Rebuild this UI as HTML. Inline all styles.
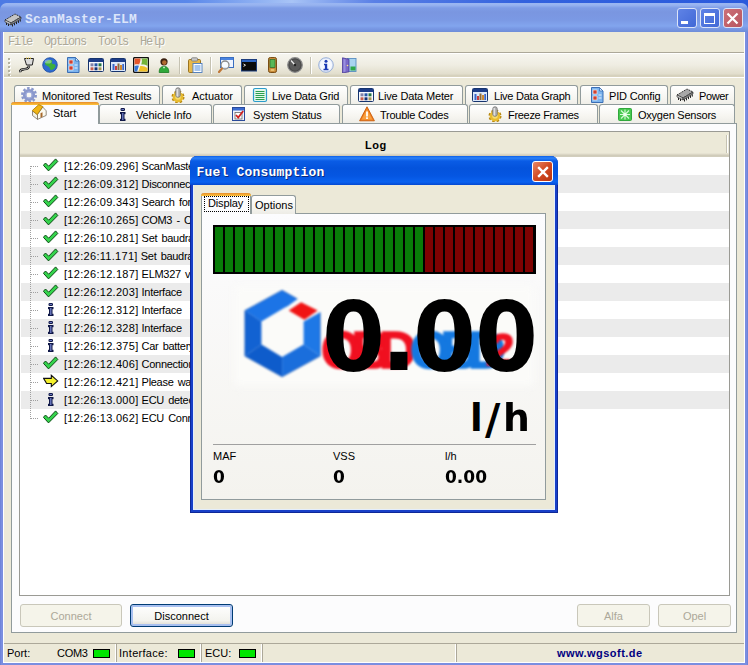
<!DOCTYPE html>
<html><head><meta charset="utf-8"><title>ScanMaster-ELM</title>
<style>
*{box-sizing:border-box;margin:0;padding:0}
html,body{width:748px;height:665px;overflow:hidden;background:#ECE9D8}
body{position:relative;font-family:"Liberation Sans",sans-serif;font-size:11px;color:#000}
.abs,body>div,body>svg,body>span{position:absolute}
#frame{left:0;top:0;width:748px;height:665px;background:#7A8EE0;border-left:1px solid #6F84DA;border-right:1px solid #6F84DA}
#title{left:0;top:0;width:748px;height:32px;background:linear-gradient(#9AB4F2 0,#9AB4F2 3px,#9AB6F2 3px,#98B4F0 5px,#7E9CE6 8px,#7A96E0 12px,#7B99E4 20px,#82A5EE 26px,#7A9AE6 28px,#6E8CD8 32px)}
#ttext{left:25px;top:12px;font-family:"Liberation Mono",monospace;font-weight:bold;font-size:13px;letter-spacing:.2px;color:#DCE5FA;white-space:pre}
#client{left:3px;top:32px;width:742px;height:631px;background:#ECE9D8;border:1px solid #fff;border-top:none}
#tbar{left:4px;top:54px;width:740px;height:22px;background:linear-gradient(#F6F5EF,#EFEDE2 50%,#E2DECD 90%,#D2CEBA)}
.menu{top:35px;font-family:"Liberation Mono",monospace;font-size:12px;letter-spacing:-1.2px;color:#ACA899;text-shadow:1px 1px 0 #fff;white-space:pre}
.cb{top:8px;width:20px;height:20px;border:1px solid #DCE4F8;border-radius:3px;background:linear-gradient(135deg,#5F83E6,#4168D6)}
.cb.x{background:linear-gradient(135deg,#CC7078,#B8555F)}
.t{white-space:nowrap;font-size:11px}
.tab{height:19px;border:1px solid #919B9C;border-bottom:none;border-radius:3px 3px 0 0;background:linear-gradient(#FFFFFF,#F6F5F0 60%,#EDECE6)}
.tab .t{position:absolute;top:3px}
.tab svg{position:absolute;top:1px}
.row{left:21px;width:708px;height:18px}
.row.g{background:#EBEBEB}
.row .t{position:absolute;left:43px;top:3px;font-size:11px}
.ts{letter-spacing:.3px}
.ms{letter-spacing:-.3px;word-spacing:1.5px}
.btn{height:23px;border:1px solid #003C74;border-radius:3px;background:linear-gradient(#fff,#F3F3EE 75%,#DAD6CB);text-align:center;line-height:23px;font-size:11px}
.btn.dis{border-color:#C9C7BA;background:#F5F4EA;color:#ACA899}
.led{width:17px;height:9px;background:#00E600;border:1px solid #000;top:649px}
.sb{top:646px;height:15px;border-left:1px solid #ACA899;box-shadow:-1px 0 0 #fff inset}
</style></head><body>
<div id="frame"></div>
<div id="title"></div><div style="left:0;top:0;width:748px;height:3px;background:linear-gradient(90deg,#4C7AE4 0,#5A88EA 25%,#A8C4F6 39%,#5A80E6 50%,#3362DE 70%,#2A5ADC 100%)"></div><div style="left:0;top:3px;width:7px;height:7px;background:radial-gradient(circle at 7px 7px,transparent 6.5px,#4C7AE4 7.5px)"></div><div style="left:741px;top:3px;width:7px;height:7px;background:radial-gradient(circle at 0 7px,transparent 6.5px,#2A5ADC 7.5px)"></div>
<svg style="left:4px;top:12px" width="18" height="16" viewBox="0 0 18 16"><path d="M1 8L11 2L17 5L7 11Z" fill="#C4C4C4" stroke="#111" stroke-width=".9" stroke-dasharray="1.2 .8"/><path d="M1 8L7 11V13L1 10Z" fill="#D8D8D8" stroke="#222" stroke-width=".6"/><path d="M7 11L17 5V7L7 13Z" fill="#888" stroke="#222" stroke-width=".6"/><path d="M2.5 10.800v2.200M4.5 11.800v2.200M8.5 12.300v2.200M10.5 11.100v2.200M12.5 9.900v2.200M14.5 8.700v2.200M16.3 7.600v2" stroke="#222" stroke-width="1"/></svg>
<div id="ttext">ScanMaster-ELM</div>
<div class="cb" style="left:677px"></div><div style="left:681px;top:21px;width:7px;height:3px;background:#fff"></div>
<div class="cb" style="left:700px"></div><div style="left:704px;top:13px;width:11px;height:11px;border:1px solid #fff;border-top-width:3px"></div>
<div class="cb x" style="left:723px"></div><svg style="left:726px;top:12px" width="13" height="13" viewBox="0 0 13 13"><path d="M1.5 1.5L11.5 11.5M11.5 1.5L1.5 11.5" stroke="#fff" stroke-width="2.2"/></svg>
<div id="client"></div><div id="tbar"></div>
<span class="menu" style="left:8px">File</span><span class="menu" style="left:44px">Options</span><span class="menu" style="left:98px">Tools</span><span class="menu" style="left:140px">Help</span>
<div style="left:4px;top:52px;width:740px;height:1px;background:#ACA899"></div><div style="left:4px;top:53px;width:740px;height:1px;background:#fff"></div>
<div style="left:8px;top:58px;width:2px;height:2px;background:#B5B2A0;box-shadow:1px 1px 0 #fff"></div><div style="left:8px;top:62px;width:2px;height:2px;background:#B5B2A0;box-shadow:1px 1px 0 #fff"></div><div style="left:8px;top:66px;width:2px;height:2px;background:#B5B2A0;box-shadow:1px 1px 0 #fff"></div><div style="left:8px;top:70px;width:2px;height:2px;background:#B5B2A0;box-shadow:1px 1px 0 #fff"></div><div style="left:8px;top:74px;width:2px;height:2px;background:#B5B2A0;box-shadow:1px 1px 0 #fff"></div>
<svg style="left:19px;top:57px" width="16" height="16" viewBox="0 0 16 16"><path d="M5.5 1.500h9l-1.2 6.500h-5.800z" fill="#DCDCDC" stroke="#222" stroke-width="1"/><path d="M7 1.200h6" stroke="#E8C840" stroke-width="1.2" stroke-dasharray="1 1"/><path d="M10 8.500c0 3.5-2.5 3.5-5 3.700s-4 .8-4 3" fill="none" stroke="#111" stroke-width="2.4"/><path d="M10 8.500c0 3.5-2.5 3.5-5 3.700s-4 .8-4 3" fill="none" stroke="#eee" stroke-width=".8"/></svg>
<svg style="left:42px;top:57px" width="16" height="16" viewBox="0 0 16 16"><circle cx="8" cy="8" r="7.3" fill="#2D6BD0" stroke="#1B4AA0" stroke-width=".8"/><path d="M3 6c2-3 5-3.5 7-2.5c1 1-1 2 0 3s3 0 3.5 2c0 2-2 4.5-4.5 4.5c-1.5-1-1-2.5-2.5-3.5s-3.5-1-3.5-3.5z" fill="#3DAE3D"/><ellipse cx="6" cy="4.5" rx="3.5" ry="2" fill="#fff" opacity=".35"/></svg>
<svg style="left:65px;top:57px" width="16" height="16" viewBox="0 0 16 16"><path d="M2.5 .5h8l3.5 3.5v11.5h-11.5z" fill="#7DB4EE" stroke="#3A6EB5"/><path d="M10.5 .5v3.5h3.5z" fill="#D6E8FA" stroke="#3A6EB5" stroke-width=".8"/><rect x="4" y="3" width="4" height="4" fill="#D04030" stroke="#fff" stroke-width=".6"/><rect x="4" y="9" width="4" height="4" fill="#D04030" stroke="#fff" stroke-width=".6"/><path d="M9.5 8h3M9.5 11h3" stroke="#E8F2FC"/></svg>
<svg style="left:88px;top:57px" width="16" height="16" viewBox="0 0 16 16"><rect x=".5" y="1.5" width="15" height="13" rx="1" fill="#F8FAFF" stroke="#16346E"/><rect x="1" y="2" width="14" height="3" fill="#1C3C88"/><rect x="2.5" y="6.3" width="3" height="3" fill="#8484A8"/><rect x="6.5" y="6.3" width="3" height="3" fill="#2456A8"/><rect x="10.5" y="6.3" width="3" height="3" fill="#247444"/><rect x="2.5" y="10.3" width="3" height="3" fill="#C46050"/><rect x="6.5" y="10.3" width="3" height="3" fill="#143474"/><rect x="10.5" y="10.3" width="3" height="3" fill="#A89454"/></svg>
<svg style="left:110px;top:57px" width="16" height="16" viewBox="0 0 16 16"><rect x=".5" y="1.5" width="15" height="13" rx="1" fill="#DCE8FA" stroke="#16346E"/><rect x="1" y="2" width="14" height="3" fill="#1C3C88"/><rect x="2.5" y="7" width="2" height="6" fill="#3A66C8"/><rect x="5" y="9" width="2" height="4" fill="#C83C3C"/><rect x="7.5" y="6.5" width="2" height="6.5" fill="#8A6A3A"/><rect x="10" y="8" width="2" height="5" fill="#D08A30"/><rect x="12.3" y="7" width="1.7" height="6" fill="#3A66C8"/></svg>
<svg style="left:133px;top:57px" width="16" height="16" viewBox="0 0 16 16"><rect x=".5" y=".5" width="15" height="15" rx="1.5" fill="#F4F4F0" stroke="#111" stroke-width="1.4"/><path d="M1.5 1.5h6c0 3-.8 4.5-1.3 6c-1.8-.4-3.5-.3-4.7.2z" fill="#E4562A"/><path d="M8.7 1.500h5.800v7.500c-2-1.3-4.2-1.7-6.3-1.400c.8-2 .8-3.8.5-6.100z" fill="#74B43A"/><path d="M1.5 9c1.3-.7 3-.8 4.4-.3c-.5 1.8-1.2 3.8-1.8 5.800h-2.600z" fill="#3474D4"/><path d="M7.2 9c2.5-.4 5 .5 7.3 2v3.500h-9.200c.7-1.7 1.4-3.7 1.9-5.500z" fill="#F0C028"/></svg>
<svg style="left:156px;top:57px" width="16" height="16" viewBox="0 0 16 16"><circle cx="8" cy="4.8" r="3.6" fill="#3A2010"/><circle cx="8.3" cy="5.6" r="2.3" fill="#B06A30"/><path d="M3.2 15.500c0-4.5 1.8-6 4.8-6s4.8 1.5 4.8 6z" fill="#2FA83A" stroke="#167A20" stroke-width=".8"/><path d="M6.8 9.800l1.2 2l1.2-2z" fill="#E8F8E8"/></svg>
<svg style="left:187px;top:57px" width="16" height="16" viewBox="0 0 16 16"><rect x="1.5" y="2.5" width="12" height="13" rx="1.2" fill="#E8B84A" stroke="#9A7420"/><rect x="4.5" y=".8" width="6" height="3.2" rx="1" fill="#C8C8C8" stroke="#777" stroke-width=".8"/><rect x="6" y="6.5" width="9" height="9" fill="#FFFFFF" stroke="#4A7CC0" stroke-width=".9"/><path d="M7.5 9h6M7.5 11h6M7.5 13h6" stroke="#4A8CE0" stroke-width="1.1"/></svg>
<svg style="left:218px;top:57px" width="16" height="16" viewBox="0 0 16 16"><rect x="2.5" y=".5" width="13" height="10" fill="#EEF4FF" stroke="#3A6EC0"/><rect x="3" y="1" width="12" height="2" fill="#4A84E0"/><circle cx="7" cy="8" r="4" fill="#F8FCFF" fill-opacity=".85" stroke="#8A8A8A" stroke-width="1.3"/><path d="M4 11.5l-3 3.5" stroke="#C07838" stroke-width="2.2" stroke-linecap="round"/></svg>
<svg style="left:241px;top:57px" width="16" height="16" viewBox="0 0 16 16"><rect x=".5" y="2.5" width="15" height="11.5" fill="#0A0A0A" stroke="#1D3E7E"/><rect x="1" y="3" width="14" height="2" fill="#2E66C4"/><path d="M2.5 7l2 1.200l-2 1.2" stroke="#fff" stroke-width=".9" fill="none"/></svg>
<svg style="left:265px;top:57px" width="16" height="16" viewBox="0 0 16 16"><rect x="3.5" y=".5" width="8" height="15" rx="1.8" fill="#C88A3A" stroke="#7A4E14"/><rect x="5" y="2.5" width="5" height="8" fill="#58B858" stroke="#2A6A2A" stroke-width=".7"/><rect x="5.5" y="12" width="4" height="2" rx=".8" fill="#E8C070"/></svg>
<svg style="left:287px;top:57px" width="16" height="16" viewBox="0 0 16 16"><circle cx="8" cy="8" r="7.3" fill="#4A4A4A" stroke="#8A8A8A" stroke-width="1.2"/><circle cx="8" cy="8" r="5.5" fill="#5A5A5A"/><path d="M8 8L4 3.5" stroke="#eee" stroke-width="1.3"/><circle cx="8" cy="8" r="1.2" fill="#222"/></svg>
<svg style="left:318px;top:57px" width="16" height="16" viewBox="0 0 16 16"><circle cx="8" cy="8" r="7.3" fill="#E4ECFA" stroke="#9AB0D8" stroke-width="1"/><circle cx="8" cy="8" r="6" fill="#F6F9FF"/><circle cx="8" cy="4.2" r="1.5" fill="#1C3CB4"/><path d="M6 6.8h3.2v5h1.3v1.4h-5v-1.4h1.4v-3.6h-.9z" fill="#1C3CB4"/></svg>
<svg style="left:341px;top:57px" width="16" height="16" viewBox="0 0 16 16"><rect x="6.5" y="1.5" width="8.5" height="13" fill="#A8D4F0" stroke="#5A8EC0" stroke-width=".9"/><rect x="9.5" y="9.5" width="5" height="4" fill="#2FA84A"/><path d="M1.5 .8l6.5 1.500v12.500l-6.5 1.200z" fill="#7A68C8" stroke="#4A3A98" stroke-width=".8"/><path d="M2.5 2l2 .5v12l-2 .4z" fill="#9A90E0"/><circle cx="6.5" cy="8.5" r=".8" fill="#FFE080"/></svg>
<div style="left:179px;top:57px;width:1px;height:17px;background:#C5C2B2;box-shadow:1px 0 0 #fff"></div><div style="left:210px;top:57px;width:1px;height:17px;background:#C5C2B2;box-shadow:1px 0 0 #fff"></div><div style="left:310px;top:57px;width:1px;height:17px;background:#C5C2B2;box-shadow:1px 0 0 #fff"></div>
<div style="left:4px;top:76px;width:740px;height:1px;background:#D8D2BD"></div><div style="left:4px;top:77px;width:740px;height:1px;background:#fff"></div>
<div class="tab" style="left:14px;top:85px;width:146px;height:21px"></div><svg style="left:21px;top:87px" width="16" height="16" viewBox="0 0 16 16"><circle cx="8" cy="8" r="6.7" fill="none" stroke="#8A98CC" stroke-width="2.6" stroke-dasharray="2.5 1.710"/><circle cx="8" cy="8" r="4.3" fill="none" stroke="#8A98CC" stroke-width="3.6"/><circle cx="8" cy="8" r="3.2" fill="none" stroke="#A8B4E0" stroke-width=".8"/></svg><span class="t" style="left:42px;top:90px;letter-spacing:-0.1px">Monitored Test Results</span>
<div class="tab" style="left:162px;top:85px;width:80px;height:21px"></div><svg style="left:170px;top:87px" width="16" height="16" viewBox="0 0 16 16"><circle cx="8" cy="10" r="5" fill="#E4B424" stroke="#B88810" stroke-width="3" stroke-dasharray="2.2 1.73"/><circle cx="8" cy="10" r="5.3" fill="#E8BC30"/><circle cx="8" cy="10" r="2.8" fill="#F6DC70"/><rect x="5.8" y=".8" width="4.4" height="9.5" rx="2" fill="#B4B4B4" stroke="#6E6E6E" stroke-width=".8"/><path d="M7.2 2v7.5" stroke="#eee" stroke-width="1.1"/></svg><span class="t" style="left:192px;top:90px;letter-spacing:0px">Actuator</span>
<div class="tab" style="left:244px;top:85px;width:104px;height:21px"></div><svg style="left:252px;top:87px" width="16" height="16" viewBox="0 0 16 16"><rect x="1.5" y="1.5" width="13" height="13" rx="1.5" fill="#E4F6EC" stroke="#2A9CCC" stroke-width="1.2"/><path d="M3.5 4.500h9M3.5 6.500h9M3.5 8.500h9M3.5 10.500h9M3.5 12.500h9" stroke="#28A04C" stroke-width="1.1"/></svg><span class="t" style="left:272px;top:90px;letter-spacing:-0.22px">Live Data Grid</span>
<div class="tab" style="left:350px;top:85px;width:113px;height:21px"></div><svg style="left:358px;top:87px" width="16" height="16" viewBox="0 0 16 16"><rect x=".5" y="1.5" width="15" height="13" rx="1" fill="#F8FAFF" stroke="#16346E"/><rect x="1" y="2" width="14" height="3" fill="#1C3C88"/><rect x="2.5" y="6.3" width="3" height="3" fill="#8484A8"/><rect x="6.5" y="6.3" width="3" height="3" fill="#2456A8"/><rect x="10.5" y="6.3" width="3" height="3" fill="#247444"/><rect x="2.5" y="10.3" width="3" height="3" fill="#C46050"/><rect x="6.5" y="10.3" width="3" height="3" fill="#143474"/><rect x="10.5" y="10.3" width="3" height="3" fill="#A89454"/></svg><span class="t" style="left:378px;top:90px;letter-spacing:-0.16px">Live Data Meter</span>
<div class="tab" style="left:465px;top:85px;width:113px;height:21px"></div><svg style="left:472px;top:87px" width="16" height="16" viewBox="0 0 16 16"><rect x=".5" y="1.5" width="15" height="13" rx="1" fill="#DCE8FA" stroke="#16346E"/><rect x="1" y="2" width="14" height="3" fill="#1C3C88"/><rect x="2.5" y="7" width="2" height="6" fill="#3A66C8"/><rect x="5" y="9" width="2" height="4" fill="#C83C3C"/><rect x="7.5" y="6.5" width="2" height="6.5" fill="#8A6A3A"/><rect x="10" y="8" width="2" height="5" fill="#D08A30"/><rect x="12.3" y="7" width="1.7" height="6" fill="#3A66C8"/></svg><span class="t" style="left:494px;top:90px;letter-spacing:-0.24px">Live Data Graph</span>
<div class="tab" style="left:580px;top:85px;width:88px;height:21px"></div><svg style="left:589px;top:87px" width="16" height="16" viewBox="0 0 16 16"><path d="M2.5 .5h8l3.5 3.5v11.5h-11.5z" fill="#7DB4EE" stroke="#3A6EB5"/><path d="M10.5 .5v3.5h3.5z" fill="#D6E8FA" stroke="#3A6EB5" stroke-width=".8"/><rect x="4" y="3" width="4" height="4" fill="#D04030" stroke="#fff" stroke-width=".6"/><rect x="4" y="9" width="4" height="4" fill="#D04030" stroke="#fff" stroke-width=".6"/><path d="M9.5 8h3M9.5 11h3" stroke="#E8F2FC"/></svg><span class="t" style="left:609px;top:90px;letter-spacing:-0.18px">PID Config</span>
<div class="tab" style="left:670px;top:85px;width:65px;height:21px"></div><svg style="left:676px;top:87px" width="18" height="16" viewBox="0 0 18 16"><path d="M1 8L11 2L17 5L7 11Z" fill="#A8A8A8" stroke="#111" stroke-width=".9" stroke-dasharray="1.2 .8"/><path d="M1 8L7 11V13L1 10Z" fill="#D8D8D8" stroke="#222" stroke-width=".6"/><path d="M7 11L17 5V7L7 13Z" fill="#888" stroke="#222" stroke-width=".6"/><path d="M2.5 10.800v2.200M4.5 11.800v2.200M8.5 12.300v2.200M10.5 11.100v2.200M12.5 9.900v2.200M14.5 8.700v2.200M16.3 7.600v2" stroke="#222" stroke-width="1"/></svg><span class="t" style="left:699px;top:90px;letter-spacing:-0.38px">Power</span>
<div class="tab" style="left:99px;top:104px;width:113px;height:20px"></div><svg style="left:115px;top:106px" width="16" height="16" viewBox="0 0 16 16"><rect x="5.5" y="2" width="4.5" height="3" rx="1.2" fill="#101848"/><rect x="6.5" y="3" width="2.5" height="1" fill="#6A78C0"/><rect x="5" y="6" width="5.5" height="2.2" fill="#101848"/><rect x="6" y="6" width="3.5" height="9" fill="#101848"/><rect x="5" y="12.8" width="5.5" height="2.2" fill="#101848"/><rect x="7" y="7" width="1.5" height="7" fill="#6472B8"/></svg><span class="t" style="left:136px;top:109px;letter-spacing:-0.12px">Vehicle Info</span>
<div class="tab" style="left:213px;top:104px;width:127px;height:20px"></div><svg style="left:231px;top:106px" width="16" height="16" viewBox="0 0 16 16"><rect x="1.5" y="1.5" width="12" height="13" fill="#F0F4FF" stroke="#2A4A9A"/><rect x="2" y="2" width="11" height="2.5" fill="#3A6AD0"/><rect x="4" y="6.5" width="7" height="6.5" fill="#fff" stroke="#666" stroke-width=".8"/><path d="M5 9l2.2 2.5l5-6.5" stroke="#D02020" stroke-width="1.8" fill="none"/></svg><span class="t" style="left:253px;top:109px;letter-spacing:-0.18px">System Status</span>
<div class="tab" style="left:342px;top:104px;width:126px;height:20px"></div><svg style="left:359px;top:106px" width="16" height="16" viewBox="0 0 16 16"><path d="M8 .8l7.4 14h-14.8z" fill="#F08020" stroke="#C85A08" stroke-width=".9" stroke-linejoin="round"/><path d="M8 3.5l5.3 10h-10.6z" fill="#F8A040"/><rect x="7.1" y="5.5" width="1.8" height="5" fill="#fff"/><rect x="7.1" y="11.3" width="1.8" height="1.7" fill="#fff"/></svg><span class="t" style="left:380px;top:109px;letter-spacing:-0.25px">Trouble Codes</span>
<div class="tab" style="left:469px;top:104px;width:129px;height:20px"></div><svg style="left:487px;top:106px" width="16" height="16" viewBox="0 0 16 16"><circle cx="8" cy="10" r="5" fill="#E4B424" stroke="#B88810" stroke-width="3" stroke-dasharray="2.2 1.73"/><circle cx="8" cy="10" r="5.3" fill="#E8BC30"/><circle cx="8" cy="10" r="2.8" fill="#F6DC70"/><rect x="5.8" y=".8" width="4.4" height="9.5" rx="2" fill="#B4B4B4" stroke="#6E6E6E" stroke-width=".8"/><path d="M7.2 2v7.5" stroke="#eee" stroke-width="1.1"/></svg><span class="t" style="left:508px;top:109px;letter-spacing:-0.3px">Freeze Frames</span>
<div class="tab" style="left:599px;top:104px;width:136px;height:20px"></div><svg style="left:618px;top:108px" width="14" height="13" viewBox="0 0 14 13"><rect x=".5" y=".5" width="13" height="12" rx="1" fill="#48C850" stroke="#30A83C"/><path d="M7 1.500v10M2 6.500h10M3 2.500l8 8M11 2.500l-8 8" stroke="#D8FCD8" stroke-width="1.1"/><circle cx="7" cy="6.5" r="1.6" fill="#F0FFF0"/></svg><span class="t" style="left:638px;top:109px;letter-spacing:-0.23px">Oxygen Sensors</span>
<div id="tabpage" style="left:11px;top:123px;width:726px;height:510px;border:1px solid #919B9C;background:#FCFCFD"></div>
<div class="tab" style="left:11px;top:102px;width:88px;height:22px;background:#FCFCFE;border-top:none"></div><div style="left:11px;top:102px;width:88px;height:3px;border-radius:3px 3px 0 0;background:linear-gradient(#E68B2C,#FFC73C)"></div><svg style="left:32px;top:104px" width="16" height="16" viewBox="0 0 16 16"><path d="M.5 7L5.5 10.500V15.400L.5 11.500Z" fill="#F2F0E6" stroke="#7A7060" stroke-width=".8"/><path d="M5.5 10.500L10.7 3L14.2 6.800V11.400L5.5 15.400Z" fill="#FCFAF0" stroke="#7A7060" stroke-width=".8"/><path d="M8.5 9.200L10.5 8.200V12.800L8.5 13.800Z" fill="#A8682A"/><path d="M.3 6.500L6.8 .6L10.9 2.600L5.2 10.600Z" fill="#F0B414" stroke="#A87808" stroke-width=".8" stroke-linejoin="round"/></svg><span class="t" style="left:53px;top:107px">Start</span>
<div style="left:19px;top:131px;width:711px;height:465px;border:1px solid #9A9A94;background:#fff"></div><div style="left:20px;top:132px;width:709px;height:25px;background:linear-gradient(#ECE9D8 0,#ECE9D8 21px,#E0DCCC 22px,#D4D0BE 23px,#CCC8B6 24px,#D8D4C4 25px)"></div><div style="left:726px;top:135px;width:1px;height:18px;background:#C5C2B2;box-shadow:1px 0 0 #fff"></div><span class="t" style="left:365px;top:139px;font-weight:bold;letter-spacing:.5px">Log</span>
<div class="row" style="top:157px"><span class="t"><span class="ts">[12:26:09.296]</span> <span class="ms">ScanMaster-ELM</span></span></div><svg style="left:43px;top:158px" width="16" height="14" viewBox="0 0 16 14"><path d="M.4 7.300L2.5 5L5.7 8.200L12.6 .9L14.8 3.500L5.5 12.900Z" fill="#34D44C" stroke="#0C4A14" stroke-width="1" stroke-linejoin="miter"/></svg><div style="left:31px;top:166px;width:8px;height:1px;background:repeating-linear-gradient(90deg,#A0A0A0 0 1px,transparent 1px 2px)"></div>
<div class="row g" style="top:175px"><span class="t"><span class="ts">[12:26:09.312]</span> <span class="ms">Disconnected</span></span></div><svg style="left:43px;top:176px" width="16" height="14" viewBox="0 0 16 14"><path d="M.4 7.300L2.5 5L5.7 8.200L12.6 .9L14.8 3.500L5.5 12.900Z" fill="#34D44C" stroke="#0C4A14" stroke-width="1" stroke-linejoin="miter"/></svg><div style="left:31px;top:184px;width:8px;height:1px;background:repeating-linear-gradient(90deg,#A0A0A0 0 1px,transparent 1px 2px)"></div>
<div class="row" style="top:193px"><span class="t"><span class="ts">[12:26:09.343]</span> <span class="ms">Search for interface</span></span></div><svg style="left:43px;top:194px" width="16" height="14" viewBox="0 0 16 14"><path d="M.4 7.300L2.5 5L5.7 8.200L12.6 .9L14.8 3.500L5.5 12.900Z" fill="#34D44C" stroke="#0C4A14" stroke-width="1" stroke-linejoin="miter"/></svg><div style="left:31px;top:202px;width:8px;height:1px;background:repeating-linear-gradient(90deg,#A0A0A0 0 1px,transparent 1px 2px)"></div>
<div class="row g" style="top:211px"><span class="t"><span class="ts">[12:26:10.265]</span> <span class="ms">COM3 - Connected</span></span></div><svg style="left:43px;top:212px" width="16" height="14" viewBox="0 0 16 14"><path d="M.4 7.300L2.5 5L5.7 8.200L12.6 .9L14.8 3.500L5.5 12.900Z" fill="#34D44C" stroke="#0C4A14" stroke-width="1" stroke-linejoin="miter"/></svg><div style="left:31px;top:220px;width:8px;height:1px;background:repeating-linear-gradient(90deg,#A0A0A0 0 1px,transparent 1px 2px)"></div>
<div class="row" style="top:229px"><span class="t"><span class="ts">[12:26:10.281]</span> <span class="ms">Set baudrate</span></span></div><svg style="left:43px;top:230px" width="16" height="14" viewBox="0 0 16 14"><path d="M.4 7.300L2.5 5L5.7 8.200L12.6 .9L14.8 3.500L5.5 12.900Z" fill="#34D44C" stroke="#0C4A14" stroke-width="1" stroke-linejoin="miter"/></svg><div style="left:31px;top:238px;width:8px;height:1px;background:repeating-linear-gradient(90deg,#A0A0A0 0 1px,transparent 1px 2px)"></div>
<div class="row g" style="top:247px"><span class="t"><span class="ts">[12:26:11.171]</span> <span class="ms">Set baudrate</span></span></div><svg style="left:43px;top:248px" width="16" height="14" viewBox="0 0 16 14"><path d="M.4 7.300L2.5 5L5.7 8.200L12.6 .9L14.8 3.500L5.5 12.900Z" fill="#34D44C" stroke="#0C4A14" stroke-width="1" stroke-linejoin="miter"/></svg><div style="left:31px;top:256px;width:8px;height:1px;background:repeating-linear-gradient(90deg,#A0A0A0 0 1px,transparent 1px 2px)"></div>
<div class="row" style="top:265px"><span class="t"><span class="ts">[12:26:12.187]</span> <span class="ms">ELM327 v1.3</span></span></div><svg style="left:43px;top:266px" width="16" height="14" viewBox="0 0 16 14"><path d="M.4 7.300L2.5 5L5.7 8.200L12.6 .9L14.8 3.500L5.5 12.900Z" fill="#34D44C" stroke="#0C4A14" stroke-width="1" stroke-linejoin="miter"/></svg><div style="left:31px;top:274px;width:8px;height:1px;background:repeating-linear-gradient(90deg,#A0A0A0 0 1px,transparent 1px 2px)"></div>
<div class="row g" style="top:283px"><span class="t"><span class="ts">[12:26:12.203]</span> <span class="ms">Interface&nbsp; found</span></span></div><svg style="left:43px;top:284px" width="16" height="14" viewBox="0 0 16 14"><path d="M.4 7.300L2.5 5L5.7 8.200L12.6 .9L14.8 3.500L5.5 12.900Z" fill="#34D44C" stroke="#0C4A14" stroke-width="1" stroke-linejoin="miter"/></svg><div style="left:31px;top:292px;width:8px;height:1px;background:repeating-linear-gradient(90deg,#A0A0A0 0 1px,transparent 1px 2px)"></div>
<div class="row" style="top:301px"><span class="t"><span class="ts">[12:26:12.312]</span> <span class="ms">Interface&nbsp; type</span></span></div><svg style="left:43px;top:301px" width="16" height="16" viewBox="0 0 16 16"><rect x="5.5" y="2" width="4.5" height="3" rx="1.2" fill="#101848"/><rect x="6.5" y="3" width="2.5" height="1" fill="#6A78C0"/><rect x="5" y="6" width="5.5" height="2.2" fill="#101848"/><rect x="6" y="6" width="3.5" height="9" fill="#101848"/><rect x="5" y="12.8" width="5.5" height="2.2" fill="#101848"/><rect x="7" y="7" width="1.5" height="7" fill="#6472B8"/></svg><div style="left:31px;top:310px;width:8px;height:1px;background:repeating-linear-gradient(90deg,#A0A0A0 0 1px,transparent 1px 2px)"></div>
<div class="row g" style="top:319px"><span class="t"><span class="ts">[12:26:12.328]</span> <span class="ms">Interface&nbsp; version</span></span></div><svg style="left:43px;top:319px" width="16" height="16" viewBox="0 0 16 16"><rect x="5.5" y="2" width="4.5" height="3" rx="1.2" fill="#101848"/><rect x="6.5" y="3" width="2.5" height="1" fill="#6A78C0"/><rect x="5" y="6" width="5.5" height="2.2" fill="#101848"/><rect x="6" y="6" width="3.5" height="9" fill="#101848"/><rect x="5" y="12.8" width="5.5" height="2.2" fill="#101848"/><rect x="7" y="7" width="1.5" height="7" fill="#6472B8"/></svg><div style="left:31px;top:328px;width:8px;height:1px;background:repeating-linear-gradient(90deg,#A0A0A0 0 1px,transparent 1px 2px)"></div>
<div class="row" style="top:337px"><span class="t"><span class="ts">[12:26:12.375]</span> <span class="ms">Car battery voltage</span></span></div><svg style="left:43px;top:337px" width="16" height="16" viewBox="0 0 16 16"><rect x="5.5" y="2" width="4.5" height="3" rx="1.2" fill="#101848"/><rect x="6.5" y="3" width="2.5" height="1" fill="#6A78C0"/><rect x="5" y="6" width="5.5" height="2.2" fill="#101848"/><rect x="6" y="6" width="3.5" height="9" fill="#101848"/><rect x="5" y="12.8" width="5.5" height="2.2" fill="#101848"/><rect x="7" y="7" width="1.5" height="7" fill="#6472B8"/></svg><div style="left:31px;top:346px;width:8px;height:1px;background:repeating-linear-gradient(90deg,#A0A0A0 0 1px,transparent 1px 2px)"></div>
<div class="row g" style="top:355px"><span class="t"><span class="ts">[12:26:12.406]</span> <span class="ms">Connection established</span></span></div><svg style="left:43px;top:356px" width="16" height="14" viewBox="0 0 16 14"><path d="M.4 7.300L2.5 5L5.7 8.200L12.6 .9L14.8 3.500L5.5 12.900Z" fill="#34D44C" stroke="#0C4A14" stroke-width="1" stroke-linejoin="miter"/></svg><div style="left:31px;top:364px;width:8px;height:1px;background:repeating-linear-gradient(90deg,#A0A0A0 0 1px,transparent 1px 2px)"></div>
<div class="row" style="top:373px"><span class="t"><span class="ts">[12:26:12.421]</span> <span class="ms">Please wait</span></span></div><svg style="left:43px;top:374px" width="16" height="14" viewBox="0 0 16 14"><path d="M.6 4.400H8.300V1.300L14.7 6.900L8.3 12.600V9.500H3.600Z" fill="#F4F02C" stroke="#111" stroke-width="1.1" stroke-linejoin="miter"/></svg><div style="left:31px;top:382px;width:8px;height:1px;background:repeating-linear-gradient(90deg,#A0A0A0 0 1px,transparent 1px 2px)"></div>
<div class="row g" style="top:391px"><span class="t"><span class="ts">[12:26:13.000]</span> <span class="ms">ECU detected</span></span></div><svg style="left:43px;top:391px" width="16" height="16" viewBox="0 0 16 16"><rect x="5.5" y="2" width="4.5" height="3" rx="1.2" fill="#101848"/><rect x="6.5" y="3" width="2.5" height="1" fill="#6A78C0"/><rect x="5" y="6" width="5.5" height="2.2" fill="#101848"/><rect x="6" y="6" width="3.5" height="9" fill="#101848"/><rect x="5" y="12.8" width="5.5" height="2.2" fill="#101848"/><rect x="7" y="7" width="1.5" height="7" fill="#6472B8"/></svg><div style="left:31px;top:400px;width:8px;height:1px;background:repeating-linear-gradient(90deg,#A0A0A0 0 1px,transparent 1px 2px)"></div>
<div class="row" style="top:409px"><span class="t"><span class="ts">[12:26:13.062]</span> <span class="ms">ECU Connected</span></span></div><svg style="left:43px;top:410px" width="16" height="14" viewBox="0 0 16 14"><path d="M.4 7.300L2.5 5L5.7 8.200L12.6 .9L14.8 3.500L5.5 12.900Z" fill="#34D44C" stroke="#0C4A14" stroke-width="1" stroke-linejoin="miter"/></svg><div style="left:31px;top:418px;width:8px;height:1px;background:repeating-linear-gradient(90deg,#A0A0A0 0 1px,transparent 1px 2px)"></div>
<div style="left:30px;top:166px;width:1px;height:253px;background:repeating-linear-gradient(#A0A0A0 0 1px,transparent 1px 2px)"></div>
<div class="btn dis" style="left:20px;top:604px;width:102px">Connect</div><div class="btn" style="left:130px;top:604px;width:103px;box-shadow:0 0 0 2px #A8C0F0 inset">Disconnect</div><div class="btn dis" style="left:577px;top:604px;width:73px">Alfa</div><div class="btn dis" style="left:658px;top:604px;width:73px">Opel</div>
<div style="left:4px;top:643px;width:740px;height:1px;background:#ACA899"></div><div style="left:115px;top:644px;width:1px;height:18px;background:#fff;box-shadow:1px 0 0 #ACA899"></div><div style="left:200px;top:644px;width:1px;height:18px;background:#fff;box-shadow:1px 0 0 #ACA899"></div><div style="left:261px;top:644px;width:1px;height:18px;background:#fff;box-shadow:1px 0 0 #ACA899"></div><div style="left:455px;top:644px;width:1px;height:18px;background:#fff;box-shadow:1px 0 0 #ACA899"></div><span class="t" style="left:7px;top:647px">Port:</span><span class="t" style="left:57px;top:647px;letter-spacing:-.3px">COM3</span><div class="led" style="left:93px"></div><span class="t" style="left:119px;top:647px;letter-spacing:.3px">Interface:</span><div class="led" style="left:178px"></div><span class="t" style="left:205px;top:647px">ECU:</span><div class="led" style="left:239px"></div><span class="t" style="left:557px;top:647px;font-weight:bold;letter-spacing:.45px;color:#000080">www.wgsoft.de</span>
<div id="dlg" style="left:190px;top:156px;width:368px;height:357px;background:#1840C8;border:1px solid #0E2898;border-top:none;border-radius:7px 7px 0 0"></div><div style="left:190px;top:156px;width:368px;height:29px;border-radius:7px 7px 0 0;background:linear-gradient(#0A5FE8 0,#2C82F8 2px,#0A5CE6 5px,#0453DC 12px,#0556E2 20px,#0A62F0 26px,#0548D0 29px)"></div><div style="left:193px;top:185px;width:362px;height:325px;background:#ECE9D8;border:1px solid #E4EEFC;border-top:none"></div><span style="left:196.5px;top:165px;text-shadow:1px 1px 0 #0A2A80;font-family:'Liberation Mono',monospace;font-weight:bold;font-size:13px;letter-spacing:.2px;color:#fff;white-space:pre">Fuel Consumption</span><div style="left:532px;top:161px;width:21px;height:21px;border:1px solid #fff;border-radius:3px;background:linear-gradient(135deg,#E88868,#D24A22 50%,#B83410)"></div><svg style="left:536px;top:165px" width="14" height="14" viewBox="0 0 13 13"><path d="M2 2L11 11M11 2L2 11" stroke="#fff" stroke-width="2.2"/></svg>
<div style="left:201px;top:213px;width:345px;height:287px;border:1px solid #919B9C;background:linear-gradient(#FCFCFE,#F4F3EE)"></div><div class="tab" style="left:251px;top:195px;width:45px;height:19px"></div><span class="t" style="left:255px;top:199px">Options</span><div class="tab" style="left:201px;top:193px;width:50px;height:21px;background:#FCFCFE;border-top:none"></div><div style="left:201px;top:193px;width:50px;height:3px;border-radius:3px 3px 0 0;background:linear-gradient(#E68B2C,#FFC73C)"></div><div style="left:204px;top:196px;width:45px;height:16px;border:1px dotted #000"></div><span class="t" style="left:208px;top:197px;letter-spacing:-.15px">Display</span>
<div style="left:213px;top:225px;width:323px;height:49px;background:#000"></div><div style="left:215px;top:227px;width:8px;height:45px;background:#087C08"></div><div style="left:225px;top:227px;width:8px;height:45px;background:#087C08"></div><div style="left:235px;top:227px;width:8px;height:45px;background:#087C08"></div><div style="left:245px;top:227px;width:8px;height:45px;background:#087C08"></div><div style="left:255px;top:227px;width:8px;height:45px;background:#087C08"></div><div style="left:265px;top:227px;width:8px;height:45px;background:#087C08"></div><div style="left:275px;top:227px;width:8px;height:45px;background:#087C08"></div><div style="left:285px;top:227px;width:8px;height:45px;background:#087C08"></div><div style="left:295px;top:227px;width:8px;height:45px;background:#087C08"></div><div style="left:305px;top:227px;width:8px;height:45px;background:#087C08"></div><div style="left:315px;top:227px;width:8px;height:45px;background:#087C08"></div><div style="left:325px;top:227px;width:8px;height:45px;background:#087C08"></div><div style="left:335px;top:227px;width:8px;height:45px;background:#087C08"></div><div style="left:345px;top:227px;width:8px;height:45px;background:#087C08"></div><div style="left:355px;top:227px;width:8px;height:45px;background:#087C08"></div><div style="left:365px;top:227px;width:8px;height:45px;background:#087C08"></div><div style="left:375px;top:227px;width:8px;height:45px;background:#087C08"></div><div style="left:385px;top:227px;width:8px;height:45px;background:#087C08"></div><div style="left:395px;top:227px;width:8px;height:45px;background:#087C08"></div><div style="left:405px;top:227px;width:8px;height:45px;background:#087C08"></div><div style="left:415px;top:227px;width:8px;height:45px;background:#087C08"></div><div style="left:425px;top:227px;width:8px;height:45px;background:#7E0202"></div><div style="left:435px;top:227px;width:8px;height:45px;background:#7E0202"></div><div style="left:445px;top:227px;width:8px;height:45px;background:#7E0202"></div><div style="left:455px;top:227px;width:8px;height:45px;background:#7E0202"></div><div style="left:465px;top:227px;width:8px;height:45px;background:#7E0202"></div><div style="left:475px;top:227px;width:8px;height:45px;background:#7E0202"></div><div style="left:485px;top:227px;width:8px;height:45px;background:#7E0202"></div><div style="left:495px;top:227px;width:8px;height:45px;background:#7E0202"></div><div style="left:505px;top:227px;width:8px;height:45px;background:#7E0202"></div><div style="left:515px;top:227px;width:8px;height:45px;background:#7E0202"></div><div style="left:525px;top:227px;width:8px;height:45px;background:#7E0202"></div>
<div style="left:234px;top:286px;width:300px;height:100px;background:#FBFBF9;filter:blur(4px)"></div><svg style="left:230px;top:280px;filter:blur(.8px)" width="110" height="110" viewBox="0 0 110 110"><path d="M14.9 30.6L52.1 10.3L67.5 19L58 26L54 28L31.4 41.4Z" fill="#1C74E6"/><path d="M14.9 30.6L31.4 41.4V64.5L14.9 76.1Z" fill="#1262D2"/><path d="M14.9 76.1L31.4 64.5L52.1 76.9V96.8Z" fill="#0E5CCB"/><path d="M52.1 96.8V76.9L73.6 64.5L90.2 76.1Z" fill="#1A6EDC"/><path d="M90.2 76.1L73.6 64.5V41.4L90.2 32.3Z" fill="#1E78E6"/><path d="M58.7 30.6L71.1 22.3L87.7 30.6L74.4 39.7Z" fill="#F01414"/><path d="M14.9 30.6L52.1 10.3L67.5 19M14.9 30.6V76.1L52.1 96.8L90.2 76.1V32.3" fill="none" stroke="#0A4CB0" stroke-width="1" opacity=".6"/></svg><span style="left:321px;top:321px;font-family:'Liberation Sans',sans-serif;font-weight:bold;font-size:52px;line-height:58px;letter-spacing:-10px;white-space:pre;filter:blur(1.1px);-webkit-text-stroke:1.5px;color:#F01020;-webkit-text-stroke-color:#F01020">OBD</span><span style="left:410px;top:321px;font-family:'Liberation Sans',sans-serif;font-weight:bold;font-size:52px;line-height:58px;letter-spacing:-10px;white-space:pre;filter:blur(1.1px);-webkit-text-stroke:1.5px;color:#1478E0;-webkit-text-stroke-color:#1478E0">OBD</span><span style="left:488px;top:321px;font-family:'Liberation Sans',sans-serif;font-weight:bold;font-size:52px;line-height:58px;letter-spacing:-10px;white-space:pre;filter:blur(1.1px);-webkit-text-stroke:1.5px;color:#F01020;-webkit-text-stroke-color:#F01020;font-size:44px;font-style:italic">2</span>
<span style="left:321.7px;top:278px;font-family:'DejaVu Sans',sans-serif;font-weight:bold;white-space:pre;color:#000;font-size:97px;line-height:120px;transform:scaleX(.934);transform-origin:0 0">0</span><span style="left:380.6px;top:277px;font-family:'DejaVu Sans',sans-serif;font-weight:bold;white-space:pre;color:#000;font-size:97px;line-height:120px">.</span><span style="left:413.2px;top:278px;font-family:'DejaVu Sans',sans-serif;font-weight:bold;white-space:pre;color:#000;font-size:97px;line-height:120px;transform:scaleX(.934);transform-origin:0 0">0</span><span style="left:474.5px;top:278px;font-family:'DejaVu Sans',sans-serif;font-weight:bold;white-space:pre;color:#000;font-size:97px;line-height:120px;transform:scaleX(.934);transform-origin:0 0">0</span>
<span style="left:470px;top:397.5px;font-family:'DejaVu Sans',sans-serif;font-weight:bold;white-space:pre;color:#000;font-size:37px;line-height:42px">l</span><span style="left:485px;top:395.5px;font-family:'DejaVu Sans',sans-serif;font-weight:bold;white-space:pre;color:#000;font-size:42px;line-height:48px">/</span><span style="left:502.5px;top:397.5px;font-family:'DejaVu Sans',sans-serif;font-weight:bold;white-space:pre;color:#000;font-size:37px;line-height:42px;transform:scaleX(1.02);transform-origin:0 0">h</span>
<div style="left:213px;top:444px;width:323px;height:1px;background:#A0A0A0"></div><span class="t" style="left:213px;top:450px">MAF</span><span style="left:213px;top:466px;font-family:'DejaVu Sans',sans-serif;font-weight:bold;font-size:18.5px;line-height:22px;white-space:pre;transform:scaleX(.92);transform-origin:0 0">0</span><span class="t" style="left:333px;top:450px">VSS</span><span style="left:333px;top:466px;font-family:'DejaVu Sans',sans-serif;font-weight:bold;font-size:18.5px;line-height:22px;white-space:pre;transform:scaleX(.92);transform-origin:0 0">0</span><span class="t" style="left:445px;top:450px">l/h</span><span style="left:445px;top:466px;font-family:'DejaVu Sans',sans-serif;font-weight:bold;font-size:18.5px;line-height:22px;white-space:pre;transform:scaleX(.92);transform-origin:0 0">0.00</span>
</body></html>
